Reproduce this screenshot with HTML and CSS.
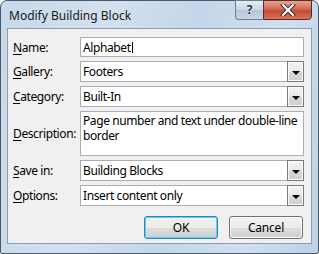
FILE: index.html
```html
<!DOCTYPE html>
<html lang="en">
<head>
    <meta charset="UTF-8">
    <title>Modify Building Block</title>
    <link rel="stylesheet" href="styles.css">
</head>
<body>
    <div class="window">
        <div class="titlebar">
            <span class="title">Modify Building Block</span>
            <div class="caption-btns">
                <div class="cap-help">?</div>
                <div class="cap-close">
                    <svg width="16" height="12" viewBox="0 0 16 12">
                        <path d="M3 1 L13 11 M13 1 L3 11" stroke="#3b2424" stroke-width="4" stroke-linecap="square"/>
                        <path d="M3 1 L13 11 M13 1 L3 11" stroke="#fff" stroke-width="2.2" stroke-linecap="square"/>
                    </svg>
                </div>
            </div>
        </div>

        <div class="client">
            <div class="form">
                <label class="lbl"><span><u>N</u>ame:</span></label>
                <div class="field text">Alphabet<span class="caret"></span></div>

                <label class="lbl"><span><u>G</u>allery:</span></label>
                <div class="field combo"><span class="val">Footers</span><span class="drop"><i></i></span></div>

                <label class="lbl"><span><u>C</u>ategory:</span></label>
                <div class="field combo"><span class="val">Built-In</span><span class="drop"><i></i></span></div>

                <label class="lbl"><span><u>D</u>escription:</span></label>
                <div class="field area">Page number and text under double-line border</div>

                <label class="lbl"><span><u>S</u>ave in:</span></label>
                <div class="field combo"><span class="val">Building Blocks</span><span class="drop"><i></i></span></div>

                <label class="lbl"><span><u>O</u>ptions:</span></label>
                <div class="field combo"><span class="val">Insert content only</span><span class="drop"><i></i></span></div>
            </div>

            <div class="buttons">
                <button class="btn default">OK</button>
                <button class="btn">Cancel</button>
            </div>
        </div>
    </div>
</body>
</html>
```

FILE: styles.css
```css
body {
    margin: 0;
    font-family: "Noto Sans", sans-serif;
    font-size: 12px;
    letter-spacing: -0.4px;
    background: #fff;
}
.window {
    width: 319px;
    height: 254px;
    box-sizing: border-box;
    border: 1px solid #4a5868;
    border-radius: 7px 7px 2px 2px;
    background: linear-gradient(100deg, #c6d8ea 0%, #d3e1ef 30%, #c4d6e9 55%, #cfdff0 80%, #bcd1e6 100%);
    padding: 0 6px 9px 6px;
    display: flex;
    flex-direction: column;
}
.titlebar {
    height: 27px;
    display: flex;
    justify-content: space-between;
    align-items: flex-start;
}
.title {
    margin-top: 6px;
    margin-left: 2px;
    color: #1a1a1a;
    font-size: 12px;
    letter-spacing: 0;
}
.caption-btns {
    display: flex;
    margin-top: -1px;
}
.cap-help {
    width: 27px;
    height: 18px;
    border: 1px solid #6d7c8c;
    border-right: none;
    border-radius: 0 0 0 4px;
    background: linear-gradient(#e4ecf4, #c9d6e3 50%, #b5c5d6 51%, #c8d6e4);
    color: #2c3640;
    font-weight: bold;
    font-size: 12px;
    text-align: center;
    line-height: 18px;
    text-shadow: 0 0 2px #fff;
}
.cap-close {
    width: 47px;
    height: 18px;
    border: 1px solid #5a2a2a;
    border-radius: 0 0 4px 0;
    background: linear-gradient(#e6a392, #d26a55 45%, #c44a36 55%, #d5745c);
    display: flex;
    align-items: center;
    justify-content: center;
}
.client {
    flex: 1;
    border: 1px solid #8d9db0;
    background: #f0f0f0;
    display: flex;
    flex-direction: column;
    padding: 8px 7px 4px 5px;
}
.form {
    display: grid;
    grid-template-columns: 67px 1fr;
    grid-template-rows: 20px 21px 21px 45px 21px 21px;
    row-gap: 4px;
}
.lbl {
    display: flex;
    align-items: center;
    color: #000;
}
.lbl u {
    text-decoration-thickness: 1px;
    text-underline-offset: 2px;
}
.field {
    box-sizing: border-box;
    border: 1px solid #abadb3;
    background: #fff;
    color: #000;
    padding-left: 2px;
}
.text {
    display: flex;
    align-items: center;
}
.caret {
    display: inline-block;
    width: 1px;
    height: 11px;
    background: #000;
    margin-left: 1px;
}
.combo {
    display: flex;
    align-items: center;
    justify-content: space-between;
    padding-right: 0;
}
.drop {
    box-sizing: border-box;
    width: 17px;
    height: 21px;
    margin: -1px -1px -1px 0;
    border: 1px solid #7a7a7a;
    box-shadow: inset 0 0 0 1px #fbfbfb;
    background: linear-gradient(#f4f4f4, #e8e8e8 50%, #d8d8d8 51%, #cfcfcf);
    display: flex;
    align-items: center;
    justify-content: center;
}
.drop i {
    width: 0;
    height: 0;
    border-left: 4px solid transparent;
    border-right: 4px solid transparent;
    border-top: 4px solid #000;
    margin-top: 2px;
}
.area {
    padding-top: 1px;
    line-height: 15px;
}
.buttons {
    margin-top: auto;
    display: flex;
    justify-content: flex-end;
    gap: 11px;
    padding-right: 1px;
}
.btn {
    width: 74px;
    height: 23px;
    font-family: "Noto Sans", sans-serif;
    font-size: 12px;
    letter-spacing: -0.2px;
    color: #000;
    border: 1px solid #707070;
    border-radius: 3px;
    background: linear-gradient(#f2f2f2, #ebebeb 50%, #dddddd 51%, #cfcfcf);
    box-shadow: inset 0 0 0 1px #fcfcfc;
    padding: 0;
}
.btn.default {
    border-color: #3c7fb1;
    box-shadow: inset 0 0 0 1px #48d8fb;
}
```
